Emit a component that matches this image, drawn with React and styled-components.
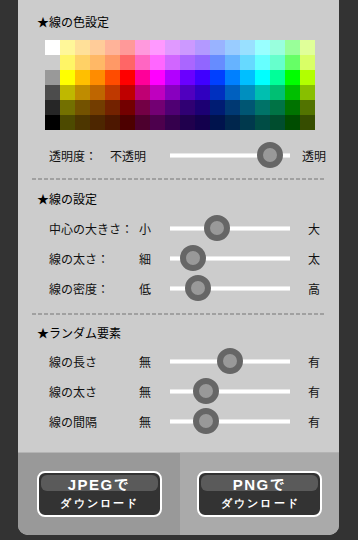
import React from "react";
import styled, { createGlobalStyle } from "styled-components";

const Global = createGlobalStyle`
  html, body { margin: 0; padding: 0; background: #333333; }
  body { font-family: "Noto Sans CJK JP", "Noto Sans", sans-serif; }
`;

const Page = styled.div`
  width: 358px;
  height: 540px;
  background: #333333;
  overflow: hidden;
`;

const Panel = styled.div`
  margin-left: 18px;
  width: 321px;
  height: 535px;
  background: #cccccc;
  border-radius: 0 0 10px 10px;
  overflow: hidden;
  display: flex;
  flex-direction: column;
  padding-top: 14px;
  box-sizing: border-box;
`;

const SectionTitle = styled.div`
  margin-left: 19px;
  margin-top: ${(p) => p.$mt || 0}px;
  height: 16px;
  line-height: 16px;
  font-size: 12px;
  color: #000;
  white-space: nowrap;
`;

const Palette = styled.div`
  margin-left: 27px;
  margin-top: 10px;
  display: grid;
  grid-template-columns: repeat(18, 15px);
  grid-auto-rows: 15px;
  width: 270px;
`;

const Cell = styled.div`
  background: ${(p) => p.$c};
`;

const Row = styled.div`
  display: grid;
  grid-template-columns: ${(p) => (p.$wide ? "61px 60px" : "90px 31px")} 120px 48px;
  align-items: center;
  height: 30px;
  padding-left: 31px;
  margin-top: ${(p) => p.$mt || 0}px;
  font-size: 12px;
  color: #111;
  white-space: nowrap;
`;

const Label = styled.span``;

const EndLabel = styled.span`
  text-align: center;
`;

const TrackArea = styled.div`
  position: relative;
  height: 30px;
  display: flex;
  align-items: center;
`;

const Track = styled.div`
  width: 100%;
  height: 5px;
  background: #ffffff;
  box-shadow: inset 0 1px 0 #e8e8e8, inset 0 -1px 0 #e8e8e8;
`;

const Knob = styled.div`
  position: absolute;
  top: 50%;
  width: 26px;
  height: 26px;
  box-sizing: border-box;
  border-radius: 50%;
  background: #999999;
  border: 6px solid #666666;
  transform: translate(-50%, -50%);
`;

const Divider = styled.div`
  margin-left: 14px;
  width: 293px;
  height: 2px;
  margin-top: ${(p) => p.$mt || 0}px;
  background: repeating-linear-gradient(
    to right,
    #a0a0a0 0 4px,
    transparent 4px 6px
  );
`;

const Footer = styled.div`
  margin-top: auto;
  height: 83px;
  display: grid;
  grid-template-columns: 162px 1fr;
  border-top: 1px solid #b4b4b4;
  box-sizing: border-box;
`;

const FooterHalf = styled.div`
  background: ${(p) => p.$bg};
  display: flex;
  align-items: center;
  justify-content: center;
`;

const DownloadButton = styled.button`
  position: relative;
  width: 125px;
  height: 46px;
  box-sizing: border-box;
  border: 2px solid #ffffff;
  border-radius: 8px;
  background: #333333;
  color: #ffffff;
  padding: 0;
  display: flex;
  flex-direction: column;
  align-items: center;
  justify-content: flex-start;
  cursor: pointer;
  overflow: hidden;
  &::before {
    content: "";
    position: absolute;
    left: 2px;
    right: 2px;
    top: 2px;
    height: 16px;
    border-radius: 6px;
    background: #5a5a5a;
  }
`;

const BtnMain = styled.span`
  position: relative;
  margin-top: 3px;
  height: 18px;
  line-height: 18px;
  font-family: "Liberation Sans", "Noto Sans CJK JP", sans-serif;
  font-weight: bold;
  font-size: 15px;
  letter-spacing: 1.5px;
`;

const BtnSub = styled.span`
  position: relative;
  margin-top: 1px;
  height: 16px;
  line-height: 16px;
  font-size: 11px;
  font-weight: bold;
  letter-spacing: 2.2px;
  padding-left: 2px;
`;

const palette = [
  ["#ffffff","#fff799","#ffe099","#ffcc99","#ffb399","#ff9999","#ff99dd","#ff99ff","#e099ff","#cc99ff","#b399ff","#99b3ff","#99ccff","#99e0ff","#99ffff","#99ffdd","#99ff99","#e0ff99"],
  ["#cccccc","#fff566","#ffd166","#ffb866","#ff9966","#ff6666","#ff66c2","#ff66ff","#d166ff","#aa66ff","#9166ff","#668cff","#66b3ff","#66d9ff","#66ffff","#66ffcc","#66ff66","#d9ff66"],
  ["#999999","#ffff00","#ffbf00","#ff8c00","#ff4c00","#ff0000","#ff0099","#ff00ff","#b200ff","#6a00ff","#4000ff","#0040ff","#0080ff","#00bfff","#00ffff","#00ff99","#00ff00","#b2ff00"],
  ["#4c4c4c","#bfb800","#bf8c00","#bf6600","#bf3900","#bf0000","#bf0073","#bf00bf","#8800bf","#5000bf","#3000bf","#0030bf","#0060bf","#008fbf","#00bfb0","#00bf73","#00bf00","#88bf00"],
  ["#262626","#737000","#735200","#733d00","#732200","#730000","#730045","#730073","#4f0073","#300073","#1c0073","#001c73","#003973","#005673","#007368","#007345","#007300","#527300"],
  ["#000000","#4d4a00","#4d3600","#4d2600","#4d1700","#4d0000","#4d002e","#4d004d","#35004d","#20004d","#13004d","#00134d","#00264d","#00394d","#004d45","#004d2e","#004d00","#364d00"],
];

function Slider({ value }) {
  return (
    <TrackArea>
      <Track />
      <Knob style={{ left: `${value * 100}%` }} />
    </TrackArea>
  );
}

function SliderRow({ label, low, high, value, wide, mt }) {
  return (
    <Row $wide={wide} $mt={mt}>
      <Label>{label}</Label>
      <Label>{low}</Label>
      <Slider value={value} />
      <EndLabel>{high}</EndLabel>
    </Row>
  );
}

export default function App() {
  return (
    <>
      <Global />
      <Page>
        <Panel>
          <SectionTitle>★線の色設定</SectionTitle>
          <Palette>
            {palette.flat().map((c, i) => (
              <Cell key={i} $c={c} />
            ))}
          </Palette>
          <SliderRow wide mt={10} label="透明度：" low="不透明" high="透明" value={0.833} />
          <Divider $mt={8} />
          <SectionTitle $mt={11}>★線の設定</SectionTitle>
          <SliderRow mt={6} label="中心の大きさ：" low="小" high="大" value={0.392} />
          <SliderRow label="線の太さ：" low="細" high="太" value={0.192} />
          <SliderRow label="線の密度：" low="低" high="高" value={0.233} />
          <Divider $mt={10} />
          <SectionTitle $mt={10}>★ランダム要素</SectionTitle>
          <SliderRow mt={5} label="線の長さ" low="無" high="有" value={0.5} />
          <SliderRow label="線の太さ" low="無" high="有" value={0.3} />
          <SliderRow label="線の間隔" low="無" high="有" value={0.3} />
          <Footer>
            <FooterHalf $bg="#999999">
              <DownloadButton>
                <BtnMain>JPEGで</BtnMain>
                <BtnSub>ダウンロード</BtnSub>
              </DownloadButton>
            </FooterHalf>
            <FooterHalf $bg="#aaaaaa">
              <DownloadButton>
                <BtnMain>PNGで</BtnMain>
                <BtnSub>ダウンロード</BtnSub>
              </DownloadButton>
            </FooterHalf>
          </Footer>
        </Panel>
      </Page>
    </>
  );
}
